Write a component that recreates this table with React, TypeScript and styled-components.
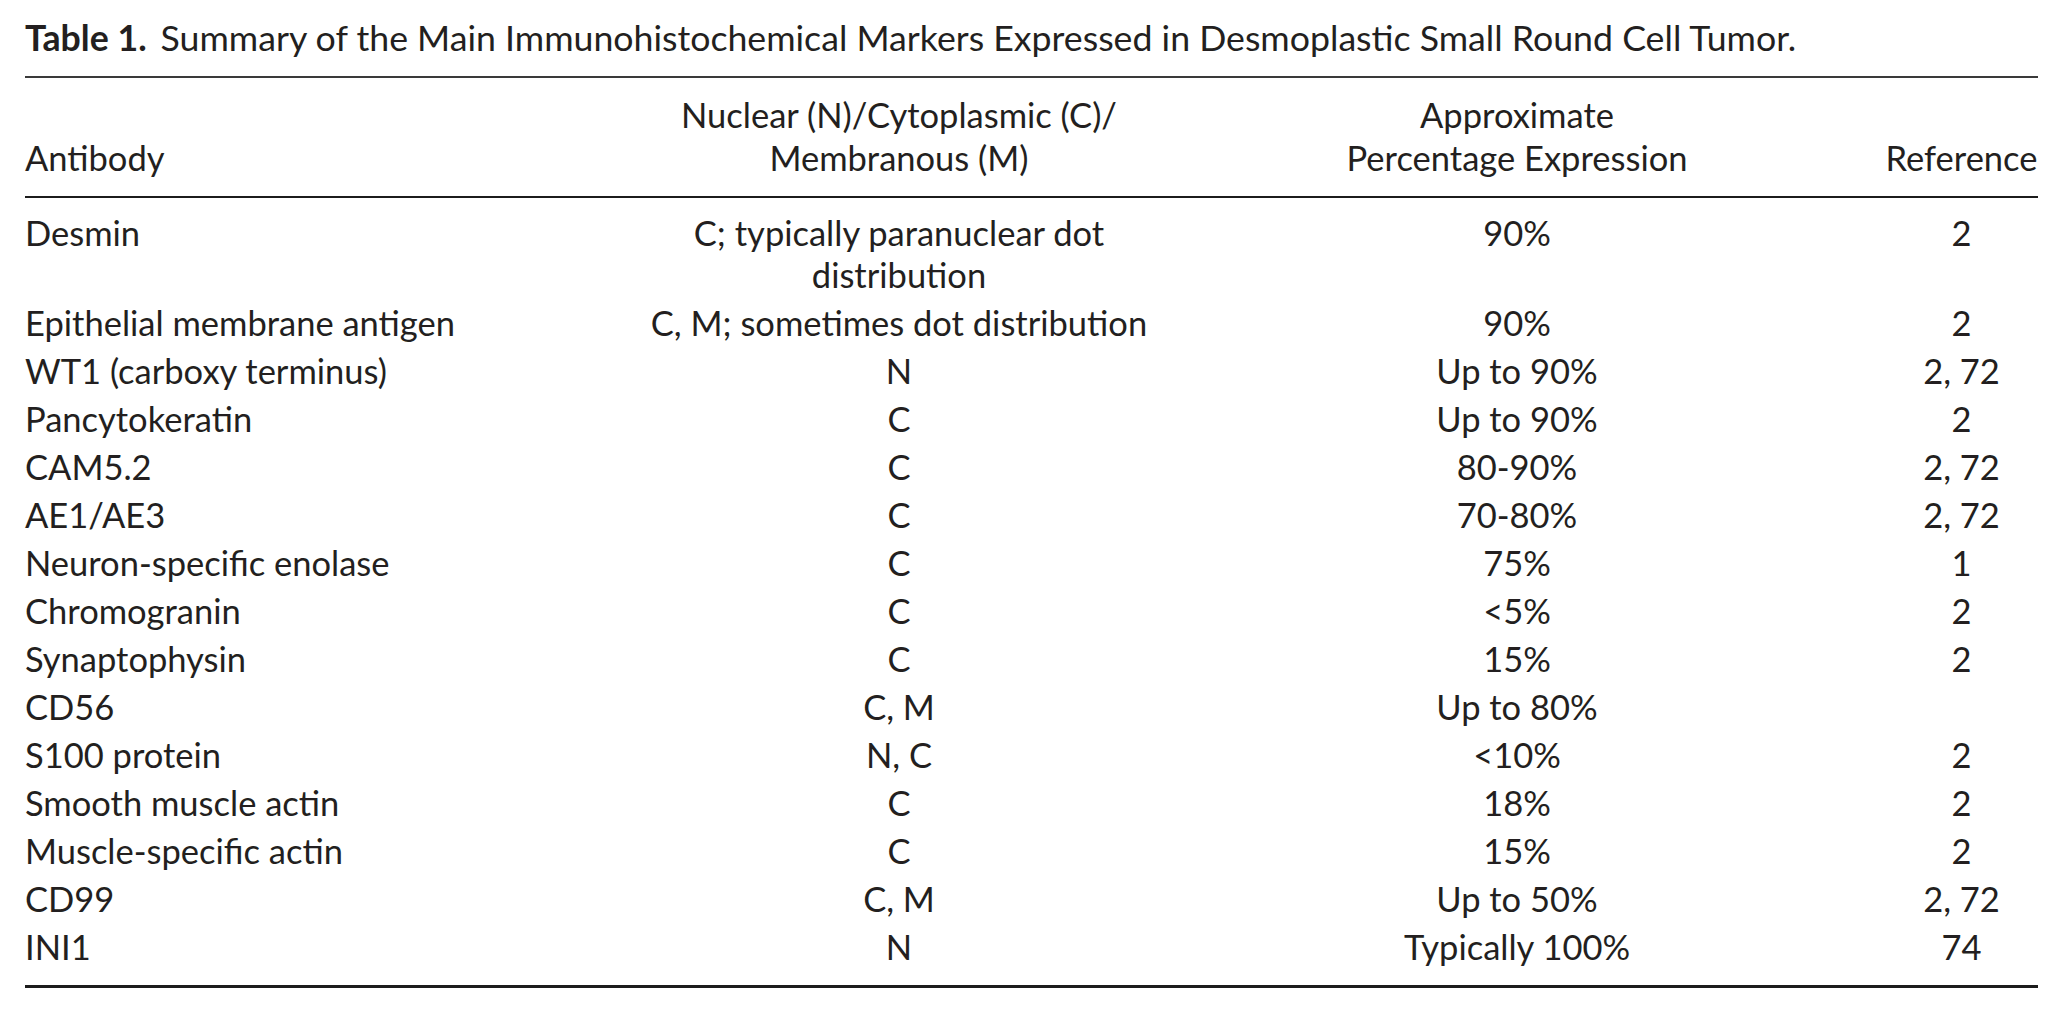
import React from 'react';
import styled, { createGlobalStyle } from 'styled-components';

const GlobalStyle = createGlobalStyle`
  html, body {
    margin: 0;
    padding: 0;
    background: #ffffff;
  }
  body {
    font-family: Lato, "Open Sans", sans-serif;
    color: #231f20;
  }
`;

const Page = styled.div`
  width: 2013px;
  padding: 16px 0 0 25px;
`;

const Caption = styled.div`
  font-size: 35.7px;
  line-height: 44px;
  margin-bottom: 16px;
  white-space: nowrap;
`;

const CaptionLabel = styled.span`
  font-weight: 700;
  margin-right: 14px;
`;

const Table = styled.table`
  width: 100%;
  border-collapse: collapse;
  table-layout: fixed;
  font-size: 34.5px;
  border-top: 2px solid #3a3a3a;
  border-bottom: 3px solid #1c1c1c;
`;

const HeadCell = styled.th<{ $align?: 'left' | 'center' }>`
  font-weight: 400;
  line-height: 43px;
  text-align: ${(p) => p.$align ?? 'center'};
  vertical-align: bottom;
  padding: 15px 0 17px;
  border-bottom: 2px solid #1c1c1c;
`;

const Row = styled.tr`
  &:first-child td {
    padding-top: 14px;
  }
  &:last-child td {
    padding-bottom: 17px;
  }
`;

const Cell = styled.td<{ $align?: 'left' | 'center' }>`
  line-height: 42px;
  text-align: ${(p) => p.$align ?? 'center'};
  vertical-align: top;
  white-space: pre-line;
  padding: 3px 0;
`;

type Marker = {
  antibody: string;
  location: string;
  expression: string;
  reference: string;
};

const markers: Marker[] = [
  { antibody: 'Desmin', location: 'C; typically paranuclear dot\ndistribution', expression: '90%', reference: '2' },
  { antibody: 'Epithelial membrane antigen', location: 'C, M; sometimes dot distribution', expression: '90%', reference: '2' },
  { antibody: 'WT1 (carboxy terminus)', location: 'N', expression: 'Up to 90%', reference: '2, 72' },
  { antibody: 'Pancytokeratin', location: 'C', expression: 'Up to 90%', reference: '2' },
  { antibody: 'CAM5.2', location: 'C', expression: '80-90%', reference: '2, 72' },
  { antibody: 'AE1/AE3', location: 'C', expression: '70-80%', reference: '2, 72' },
  { antibody: 'Neuron-specific enolase', location: 'C', expression: '75%', reference: '1' },
  { antibody: 'Chromogranin', location: 'C', expression: '<5%', reference: '2' },
  { antibody: 'Synaptophysin', location: 'C', expression: '15%', reference: '2' },
  { antibody: 'CD56', location: 'C, M', expression: 'Up to 80%', reference: '' },
  { antibody: 'S100 protein', location: 'N, C', expression: '<10%', reference: '2' },
  { antibody: 'Smooth muscle actin', location: 'C', expression: '18%', reference: '2' },
  { antibody: 'Muscle-specific actin', location: 'C', expression: '15%', reference: '2' },
  { antibody: 'CD99', location: 'C, M', expression: 'Up to 50%', reference: '2, 72' },
  { antibody: 'INI1', location: 'N', expression: 'Typically 100%', reference: '74' },
];

const App = () => {
  return (
    <>
      <GlobalStyle />
      <Page>
        <Caption>
          <CaptionLabel>Table 1.</CaptionLabel>
          Summary of the Main Immunohistochemical Markers Expressed in Desmoplastic Small Round Cell Tumor.
        </Caption>
        <Table>
          <colgroup>
            <col style={{ width: 624 }} />
            <col style={{ width: 500 }} />
            <col style={{ width: 736 }} />
            <col />
          </colgroup>
          <thead>
            <tr>
              <HeadCell $align="left">Antibody</HeadCell>
              <HeadCell>
                Nuclear (N)/Cytoplasmic (C)/
                <br />
                Membranous (M)
              </HeadCell>
              <HeadCell>
                Approximate
                <br />
                Percentage Expression
              </HeadCell>
              <HeadCell>Reference</HeadCell>
            </tr>
          </thead>
          <tbody>
            {markers.map((m) => (
              <Row key={m.antibody}>
                <Cell $align="left">{m.antibody}</Cell>
                <Cell>{m.location}</Cell>
                <Cell>{m.expression}</Cell>
                <Cell>{m.reference}</Cell>
              </Row>
            ))}
          </tbody>
        </Table>
      </Page>
    </>
  );
};

export default App;
